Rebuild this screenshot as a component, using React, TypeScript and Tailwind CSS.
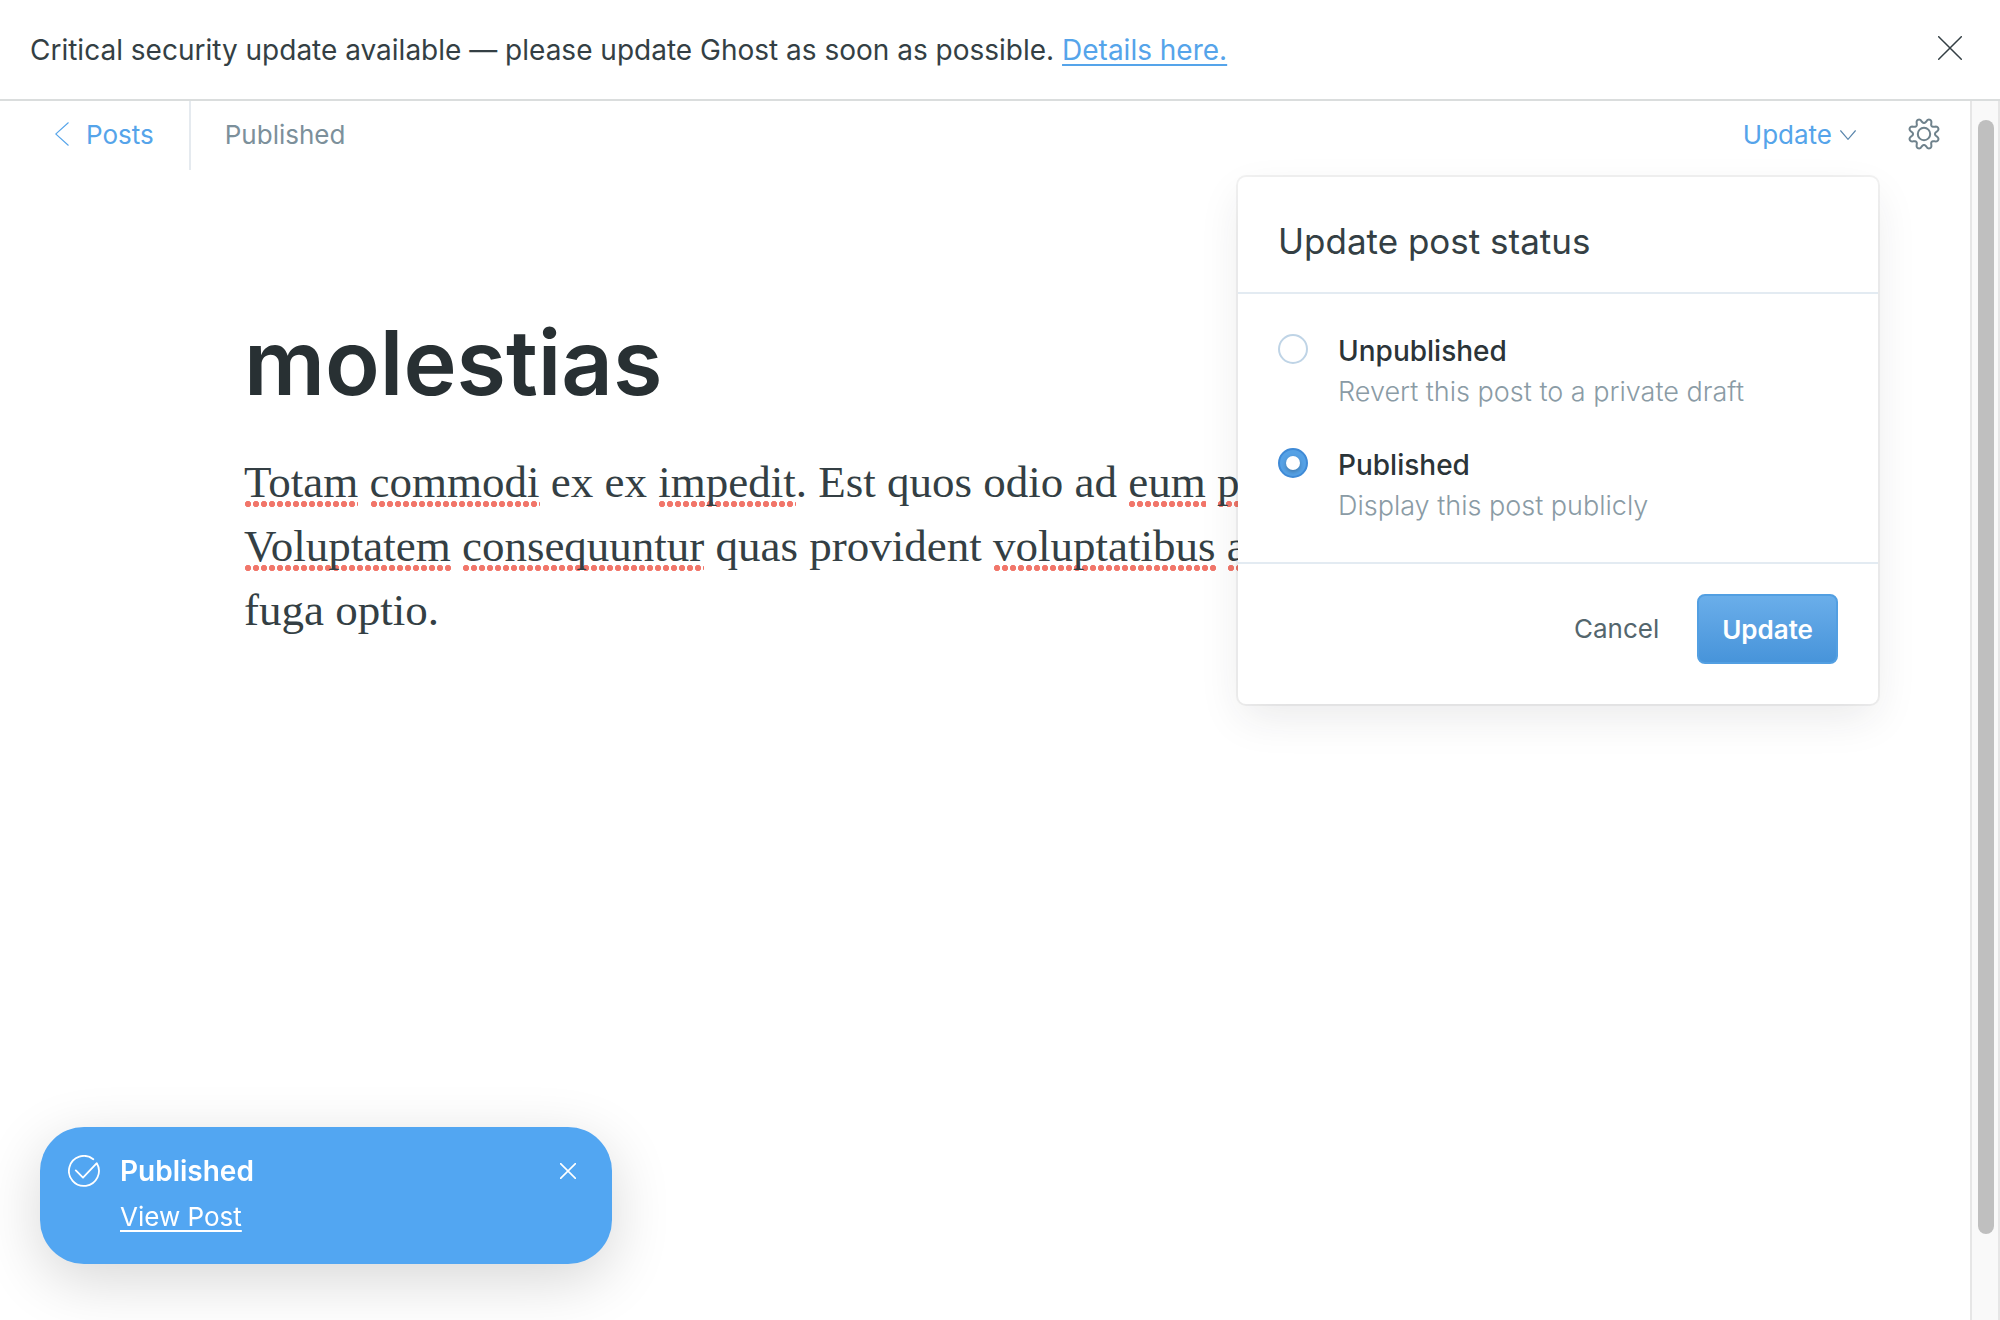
import { useState } from "react";
import type { ReactNode } from "react";

function gearOutline(): string {
  const points: string[] = [];
  for (let i = 0; i < 192; i++) {
    const t = (i / 192) * Math.PI * 2;
    const wave = Math.tanh(1.2 * Math.cos(8 * (t - Math.PI / 8))) / Math.tanh(1.2);
    const r = 13.2 + 2.2 * wave;
    points.push(`${(16 + r * Math.cos(t)).toFixed(2)} ${(16 + r * Math.sin(t)).toFixed(2)}`);
  }
  return `M${points.join("L")}Z`;
}

function GearIcon() {
  return (
    <svg viewBox="0 0 32 32" className="size-8" fill="none" stroke="currentColor" strokeWidth="2" aria-hidden="true">
      <path d={gearOutline()} strokeLinejoin="round" />
      <circle cx="16" cy="16" r="6.2" />
    </svg>
  );
}

function CloseIcon({ className, width }: { className: string; width: number }) {
  return (
    <svg viewBox="0 0 24 24" className={className} fill="none" stroke="currentColor" strokeWidth={width} strokeLinecap="round" aria-hidden="true">
      <path d="M.7.7l22.6 22.6M23.3.7.7 23.3" />
    </svg>
  );
}

function Misspelled({ children }: { children: ReactNode }) {
  return (
    <span className="bg-[radial-gradient(circle,#f1766a_2.8px,transparent_3.5px)] bg-[length:8px_6px] bg-bottom-left bg-repeat-x">
      {children}
    </span>
  );
}

const statuses = [
  { id: "unpublished", label: "Unpublished", hint: "Revert this post to a private draft" },
  { id: "published", label: "Published", hint: "Display this post publicly" },
];

function StatusMenu() {
  const [status, setStatus] = useState("published");
  return (
    <form
      className="absolute top-[76px] right-[92px] z-10 w-[640px] rounded-lg bg-white shadow-[0_0_0_2px_rgba(0,0,0,0.05),0_16px_44px_-4px_rgba(39,44,49,0.1)]"
      onSubmit={(e) => e.preventDefault()}
    >
      <h2 id="status-title" className="px-10 pt-[42px] pb-[29px] text-[35px] leading-[44px] text-[#343f44]">
        Update post status
      </h2>
      <div role="radiogroup" aria-labelledby="status-title" className="flex flex-col gap-8 border-y-2 border-[#e3ebf2] px-10 pt-9 pb-9">
        {statuses.map((s) => (
          <div key={s.id} className="flex gap-[30px]">
            <input
              type="radio"
              name="status"
              id={s.id}
              checked={status === s.id}
              onChange={() => setStatus(s.id)}
              aria-describedby={s.id + "-hint"}
              className="mt-1 grid size-[30px] shrink-0 appearance-none place-items-center rounded-full border-2 border-[#bfd4e6] bg-white before:size-[14px] before:rounded-full before:bg-white checked:border-[#3f8ad6] checked:bg-[#55a1e5] checked:before:shadow-[0_2px_4px_rgba(0,0,0,0.25)]"
            />
            <div>
              <label htmlFor={s.id} className="block text-[28px] leading-[42px] font-medium text-[#2b3438]">
                {s.label}
              </label>
              <p id={s.id + "-hint"} className="text-[27px] leading-10 font-light text-[#8a9ba5]">
                {s.hint}
              </p>
            </div>
          </div>
        ))}
      </div>
      <div className="flex items-center justify-end gap-[38px] px-10 pt-[30px] pb-10">
        <button type="button" className="text-[26px] leading-10 text-[#54666d]">
          Cancel
        </button>
        <button
          type="submit"
          className="h-[70px] rounded-lg border-2 border-[#529fe2] bg-linear-to-b from-[#6aaeea] to-[#4794da] px-[23px] text-[26px] font-semibold text-white"
        >
          Update
        </button>
      </div>
    </form>
  );
}

export default function App() {
  return (
    <div className="flex min-h-screen flex-col bg-white font-[Inter,sans-serif] text-[#343f44]">
      <div role="alert" className="flex items-start justify-between border-b-2 border-[#dadddd] pt-[30px] pr-[38px] pb-7 pl-[30px]">
        <p className="text-[28px] leading-[41px]">
          Critical security update available — please update Ghost as soon as possible.{" "}
          <a href="#details" className="text-[#55a4ea] underline decoration-2 underline-offset-4">
            Details here.
          </a>
        </p>
        <button type="button" aria-label="Dismiss" className="mt-1.5">
          <CloseIcon className="size-6" width={1.5} />
        </button>
      </div>

      <div className="flex flex-1">
        <main className="relative min-w-0 flex-1">
          <header className="flex h-[69px] items-center pr-[30px] text-[26px]">
            <a href="#posts" className="flex items-center gap-[17px] pr-[35px] pb-[3px] pl-[55px] text-[#55a4ea]">
              <svg viewBox="0 0 14 24" className="h-6 w-3.5" fill="none" stroke="currentColor" strokeWidth="1.1" aria-hidden="true">
                <path d="M13.5.5.7 12l12.8 11.5" />
              </svg>
              Posts
            </a>
            <span className="flex flex-1 items-center self-stretch border-l-2 border-[#e5eaef] pb-0.5 pl-[34px] text-[#7c909b]">
              Published
            </span>
            <button type="button" className="flex items-center gap-2 pb-0.5 text-[#55a4ea]">
              Update
              <svg viewBox="0 0 16 10" className="h-2.5 w-4" fill="none" stroke="#5a86ac" strokeWidth="1.2" aria-hidden="true">
                <path d="M.4.5 8 9.3 15.6.5" />
              </svg>
            </button>
            <button type="button" aria-label="Settings" className="ml-[52px] pb-[3px] text-[#6f828c]">
              <GearIcon />
            </button>
          </header>
          <StatusMenu />

          <article className="mx-auto max-w-[1482px] pt-[138px]">
            <h1 className="text-[90px] leading-[110px] font-semibold text-[#283033]">molestias</h1>
            <p className="mt-8 font-['Liberation_Serif',serif] text-[45px] leading-[64px] text-[#343f44]">
              <Misspelled>Totam</Misspelled> <Misspelled>commodi</Misspelled> ex ex <Misspelled>impedit</Misspelled>. Est quos odio ad{" "}
              <Misspelled>eum</Misspelled> <Misspelled>porro</Misspelled>
              <br />
              <Misspelled>Voluptatem</Misspelled> <Misspelled>consequuntur</Misspelled> quas provident <Misspelled>voluptatibus</Misspelled>{" "}
              <Misspelled>aut</Misspelled>
              <br />
              fuga optio.
            </p>
          </article>
        </main>

        <div aria-hidden="true" className="flex w-[30px] flex-col border-x-2 border-[#e6e6e6] bg-[#f9f9f9] px-1.5 pt-[19px] pb-[86px]">
          <div className="w-4 flex-1 rounded-full bg-[#bfbfbf]" />
        </div>
      </div>

      <aside
        role="status"
        className="fixed bottom-14 left-10 flex w-[572px] items-start gap-5 rounded-[44px] bg-[#52a6f2] pt-6 pr-9 pb-[27px] pl-7 text-white shadow-[0_16px_60px_rgba(0,0,0,0.16)]"
      >
        <svg viewBox="0 0 32 32" className="mt-1 size-8" fill="none" stroke="currentColor" strokeWidth="1.8" strokeLinecap="round" strokeLinejoin="round" aria-hidden="true">
          <path d="M25.3 4.2A15 15 0 1 0 28.8 8.2L15 22.7 7.8 15.4" />
        </svg>
        <div className="flex-1">
          <p className="text-[28px] leading-10 font-semibold">Published</p>
          <a href="#view" className="mt-1.5 block w-fit text-[26px] leading-10 underline decoration-2 underline-offset-4">
            View Post
          </a>
        </div>
        <button type="button" aria-label="Close" className="mt-3">
          <CloseIcon className="size-4" width={2.4} />
        </button>
      </aside>
    </div>
  );
}
